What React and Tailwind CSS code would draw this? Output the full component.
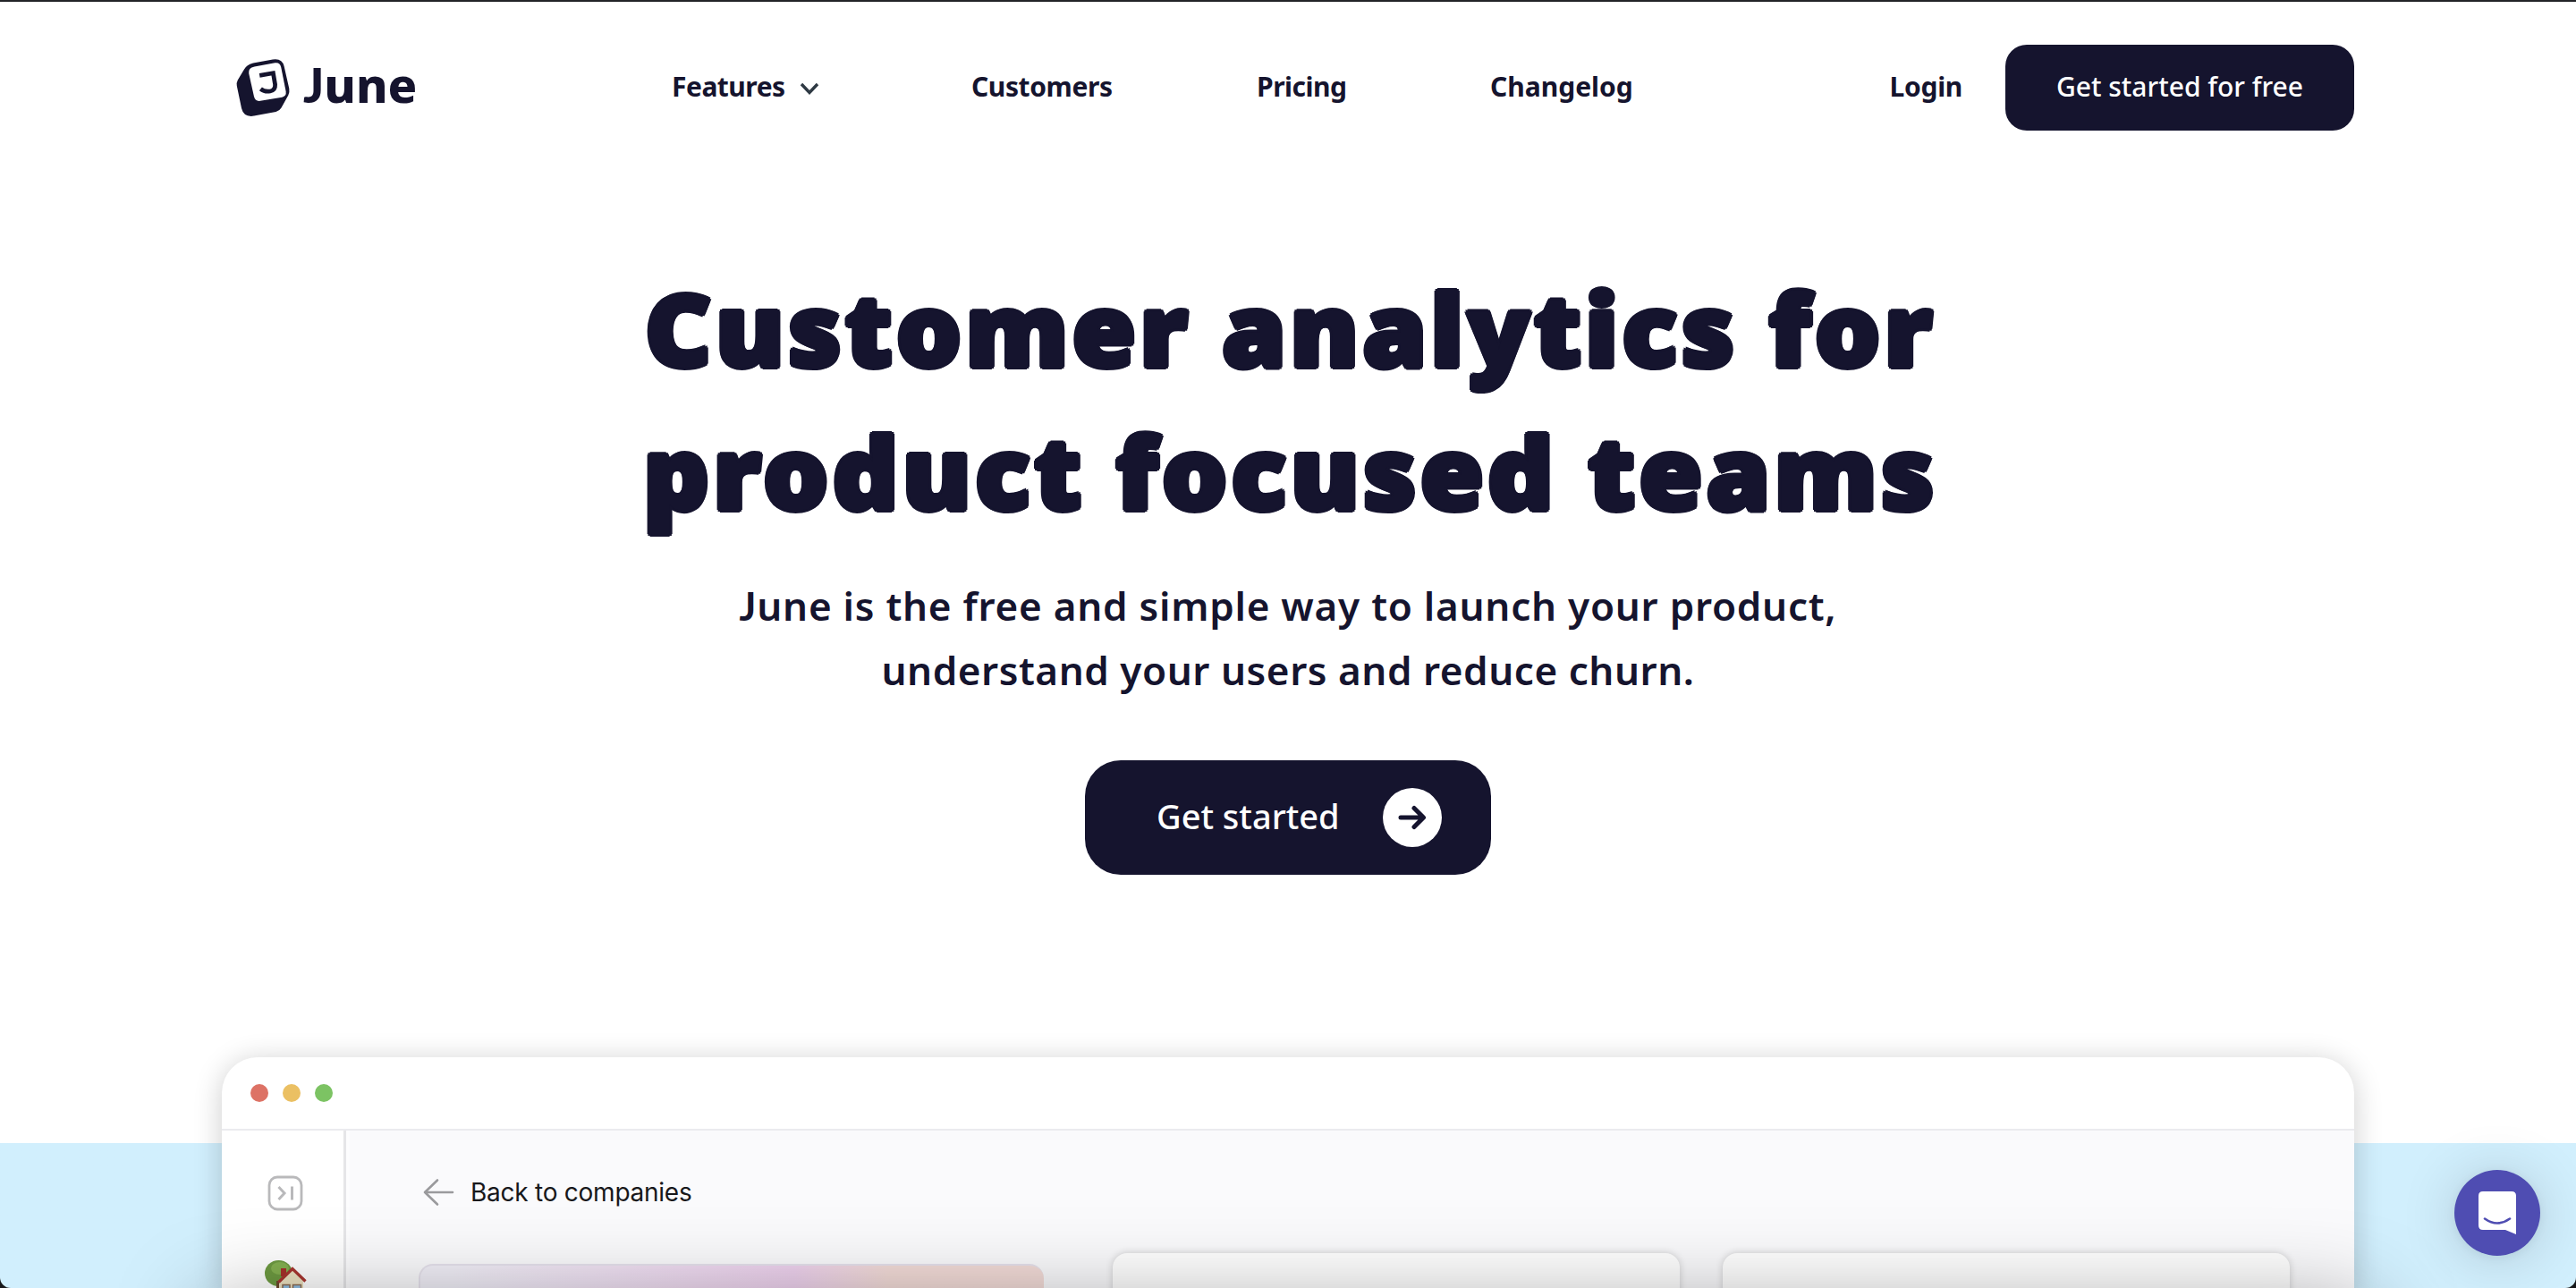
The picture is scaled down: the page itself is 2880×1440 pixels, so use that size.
import React from "react";

function Logo() {
  return (
    <svg viewBox="0 0 68 76" className="h-[76px] w-[68px] shrink-0">
      <path
        d="M16.5 13.5 Q19 11.5 23 10.6 L45 6.4 Q55.5 4.8 57.6 14 L63.3 39 Q64 43 62.3 46.5 L54.5 60.5 Q52.5 64 48.5 65 L24 69.6 Q12.5 71.5 10 61 L4.8 36 Q4.2 32.5 5.8 29.5 L13 17.5 Q14.5 14.8 16.5 13.5 Z"
        fill="#15142e"
      />
      <path
        d="M24.5 14.4 L47.5 10.3 Q53 9.4 54.2 15 L59.6 42 Q60.5 47.6 55.3 48.7 L31 52.8 Q25.4 53.6 24 48 L18.2 22 Q17.3 15.8 24.5 14.4 Z"
        fill="#fff"
      />
      <path d="M30.2 24.4 L45.4 21.7 L47.6 34.5 Q48 40.8 42 42 Q35.8 43 31.4 39.4" fill="none" stroke="#15142e" strokeWidth="4.8" />
    </svg>
  );
}

function House() {
  return (
    <svg viewBox="0 0 48 46" className="h-[46px] w-12 shrink-0">
      <ellipse cx="16.500" cy="15.500" rx="15.5" ry="14.5" fill="#6d9a41" />
      <ellipse cx="18" cy="10" rx="10" ry="7" fill="#84b050" />
      <rect x="14" y="24" width="5" height="20" fill="#6b4a2c" />
      <path d="M17 46 V24 L32 11 L44 24 V46 Z" fill="#ece2c2" />
      <rect x="19" y="10" width="6" height="9" fill="#a5302a" />
      <path d="M16.500 25.500 L32 10.500 L46.500 24.500" fill="none" stroke="#a8352f" strokeWidth="3.2" />
      <rect x="21" y="28.500" width="8" height="12" fill="#8fc0e6" stroke="#8a6a50" strokeWidth="1.5" />
      <rect x="32.500" y="28.500" width="9" height="8" fill="#8fc0e6" stroke="#8a6a50" strokeWidth="1.5" />
    </svg>
  );
}

function Header() {
  return (
    <header className="flex h-24 items-center text-[30px] leading-10 font-bold">
      <div className="flex w-[504px] items-center pl-3">
        <Logo />
        <span className="-mt-2 ml-[11px] text-[54px] leading-[54px] font-extrabold">
          <span className="font-[Lato] font-black">J</span>une
        </span>
      </div>
      <nav className="flex grow items-center pb-[3px]">
        <div className="flex w-[334px] items-center gap-[16px]">
          <span className="-ml-px tracking-[-0.5px]">Features</span>
          <svg viewBox="0 0 22 14" className="mt-1 h-3.5 w-[22px]">
            <path d="M2 2 L11 11.500 L20 2" fill="none" stroke="#2f3a44" strokeWidth="3.4" />
          </svg>
        </div>
        <span className="w-[319px] tracking-[-0.4px]">Customers</span>
        <span className="w-[261px] tracking-[-0.5px]">Pricing</span>
        <span>Changelog</span>
      </nav>
      <span className="mr-[48px] pb-[3px] tracking-[-0.3px]">Login</span>
      <button className="flex h-24 w-[390px] items-center justify-center rounded-3xl bg-[#15142e] pb-[3px] font-medium text-white">
        Get started for free
      </button>
    </header>
  );
}

function Hero() {
  return (
    <section className="mt-[141px] flex flex-col items-center">
      <h1 className="scale-x-[1.03] pl-[5px] text-center text-[112px] leading-[160px] font-black tracking-[3.9px] [text-shadow:3px_0_#15142e,2.100px_2.100px_#15142e,0_3px_#15142e,-2.100px_2.100px_#15142e,-3px_0_#15142e,-2.100px_-2.100px_#15142e,0_-3px_#15142e,2.100px_-2.100px_#15142e]">
        Customer analytics for
        <br />
        product focused teams
      </h1>
      <p className="mt-[34px] text-center text-[44px] leading-[72px] font-semibold tracking-[0.55px]">
        <span className="tracking-[0.75px]">
          <span className="font-[Lato] font-bold">J</span>une is the free and simple way to launch your product,
        </span>
        <br />
        understand your users and reduce churn.
      </p>
      <button className="mt-[65px] flex h-32 w-[454px] items-center justify-between rounded-[40px] bg-[#15142e] pr-[55px] pl-[80px] text-[38px] font-medium text-white">
        <span className="pb-1 whitespace-nowrap">Get started</span>
        <span className="flex size-[66px] items-center justify-center rounded-full bg-white">
          <svg viewBox="0 0 32 30" className="h-[30px] w-8">
            <path d="M3 15 H28 M18 4.500 L28.500 15 L18 25.500" fill="none" stroke="#15142e" strokeWidth="5" strokeLinecap="round" strokeLinejoin="round" />
          </svg>
        </span>
      </button>
    </section>
  );
}

function BrowserWindow() {
  return (
    <section className="mt-[204px] flex h-[258px] flex-col rounded-t-[40px] bg-white shadow-[0_4px_32px_rgba(0,0,0,0.2)]">
      <div className="flex h-20 shrink-0 items-center gap-4 pl-8">
        <i className="size-5 rounded-full bg-[#dd7265]" />
        <i className="size-5 rounded-full bg-[#ebc063]" />
        <i className="size-5 rounded-full bg-[#7cc363]" />
      </div>
      <div className="flex grow border-t-2 border-[#ebebef]">
        <aside className="flex w-[139px] flex-col items-center border-r-3 border-[#e6e6e8] pt-[50px]">
          <svg viewBox="0 0 40 40" className="ml-1.5 size-10 shrink-0" fill="none" stroke="#b9b9bb">
            <rect x="2" y="2" width="36" height="36" rx="9" strokeWidth="2.8" />
            <path d="M12.500 13 L19 20 L12.500 27 M27.500 12.500 V27.500" strokeWidth="3" />
          </svg>
          <div className="mt-[54px] h-[32px] overflow-hidden pl-1.5">
            <House />
          </div>
        </aside>
        <div className="flex grow flex-col border-l-4 border-[#fdfdfe] bg-[#fafafc] pl-[77px]">
          <div className="mt-[49px] flex h-10 items-center gap-[18px]">
            <svg viewBox="0 0 36 32" className="ml-1 h-8 w-9">
              <path d="M34 16 H3 M17 2.500 L3 16 L17 29.500" fill="none" stroke="#9a9a9d" strokeWidth="2.6" strokeLinecap="round" strokeLinejoin="round" />
            </svg>
            <span className="font-[Inter] text-[28px] tracking-[-0.25px] text-[#18181b]">Back to companies</span>
          </div>
          <div className="mt-[48px] flex h-[39px]">
            <div className="mt-[12px] h-20 w-[699px] shrink-0 rounded-t-2xl border-t-2 border-l-2 border-[#e6e2ec] bg-linear-to-r from-[#f1eff8] from-5% via-[#eed2ee] via-60% to-[#f3dcd8] to-75%" />
            <div className="ml-[77px] h-20 w-[634px] shrink-0 rounded-t-2xl bg-white shadow-[0_0_8px_rgba(0,0,0,0.18)]" />
            <div className="ml-[48px] h-20 w-[634px] shrink-0 rounded-t-2xl bg-white shadow-[0_0_8px_rgba(0,0,0,0.18)]" />
          </div>
        </div>
      </div>
    </section>
  );
}

export default function App() {
  return (
    <div className="relative h-[1440px] w-[2880px] overflow-hidden bg-[#17181a] font-['Noto_Sans',sans-serif] text-[#15142e]">
      <div className="h-0.5 bg-[#222327]" />
      <div className="h-[1438px] overflow-hidden rounded-b-xl bg-linear-to-b from-white from-[1276px] to-[#d1effd] to-[1276px] px-[248px] pt-12">
        <Header />
        <Hero />
        <BrowserWindow />
      </div>
      <div className="absolute top-[1460px] right-[230px] left-[230px] h-40 shadow-[0_0_100px_rgba(0,0,0,0.38)]" />
      <div className="absolute top-[1308px] right-10 flex size-24 items-center justify-center rounded-full bg-[#4f4db2] shadow-[0_2px_12px_rgba(0,0,0,0.06),0_4px_64px_rgba(0,0,0,0.16)]">
        <svg viewBox="0 0 42 48" className="h-12 w-[42px]">
          <path d="M5 0 H37 Q42 0 42 5 V48 L30 43 H5 Q0 43 0 38 V5 Q0 0 5 0 Z" fill="#fff" />
          <path d="M7 30.500 Q21 40.500 35 30.500" fill="none" stroke="#4f4db2" strokeWidth="2.6" strokeLinecap="round" />
        </svg>
      </div>
    </div>
  );
}
